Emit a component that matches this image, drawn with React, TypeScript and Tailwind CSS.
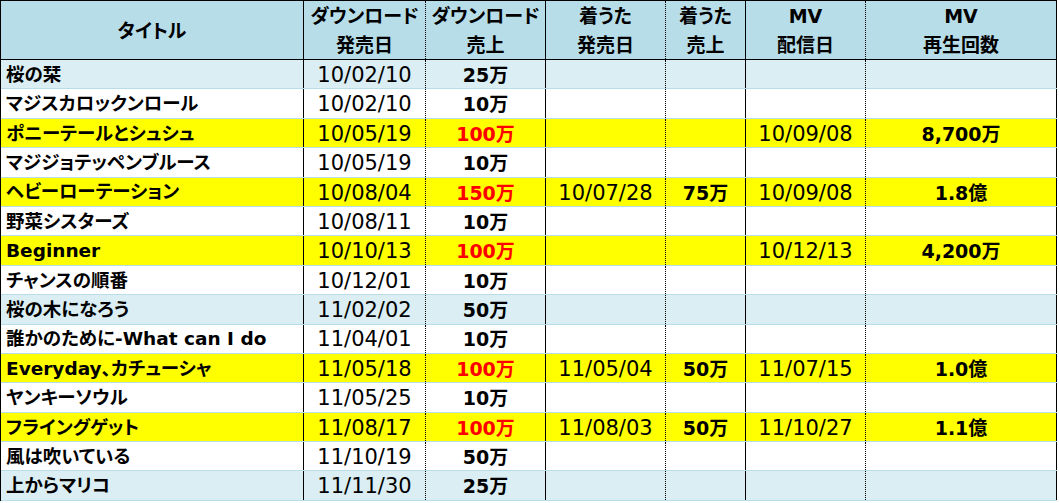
import React from "react";

type Row = {
  title: string;
  dlDate: string;
  dlSales: string;
  chDate?: string;
  chSales?: string;
  mvDate?: string;
  mvViews?: string;
  bg: "blue" | "white" | "yellow";
};

const rows: Row[] = [
  { title: "桜の栞", dlDate: "10/02/10", dlSales: "25万", bg: "blue" },
  { title: "マジスカロックンロール", dlDate: "10/02/10", dlSales: "10万", bg: "white" },
  { title: "ポニーテールとシュシュ", dlDate: "10/05/19", dlSales: "100万", mvDate: "10/09/08", mvViews: "8,700万", bg: "yellow" },
  { title: "マジジョテッペンブルース", dlDate: "10/05/19", dlSales: "10万", bg: "white" },
  { title: "ヘビーローテーション", dlDate: "10/08/04", dlSales: "150万", chDate: "10/07/28", chSales: "75万", mvDate: "10/09/08", mvViews: "1.8億", bg: "yellow" },
  { title: "野菜シスターズ", dlDate: "10/08/11", dlSales: "10万", bg: "white" },
  { title: "Beginner", dlDate: "10/10/13", dlSales: "100万", mvDate: "10/12/13", mvViews: "4,200万", bg: "yellow" },
  { title: "チャンスの順番", dlDate: "10/12/01", dlSales: "10万", bg: "white" },
  { title: "桜の木になろう", dlDate: "11/02/02", dlSales: "50万", bg: "blue" },
  { title: "誰かのために-What can I do", dlDate: "11/04/01", dlSales: "10万", bg: "white" },
  { title: "Everyday、カチューシャ", dlDate: "11/05/18", dlSales: "100万", chDate: "11/05/04", chSales: "50万", mvDate: "11/07/15", mvViews: "1.0億", bg: "yellow" },
  { title: "ヤンキーソウル", dlDate: "11/05/25", dlSales: "10万", bg: "white" },
  { title: "フライングゲット", dlDate: "11/08/17", dlSales: "100万", chDate: "11/08/03", chSales: "50万", mvDate: "11/10/27", mvViews: "1.1億", bg: "yellow" },
  { title: "風は吹いている", dlDate: "11/10/19", dlSales: "50万", bg: "white" },
  { title: "上からマリコ", dlDate: "11/11/30", dlSales: "25万", bg: "blue" },
];

const bgClass = {
  blue: "bg-[#daeef3]",
  white: "bg-white",
  yellow: "bg-[#ffff00]",
};

function HeadCell({ lines, className }: { lines: string[]; className: string }) {
  return (
    <div className={`flex flex-col items-center justify-center leading-[29px] pt-[2px] ${className}`}>
      {lines.map((l) => (
        <span key={l}>{l}</span>
      ))}
    </div>
  );
}

export default function App() {
  const solid = "border-r border-black";
  const dotted = "border-r border-dotted border-black";

  return (
    <div className="w-[1059px] h-[503px] bg-white">
      <div
        className="w-[1057px] border-l border-t border-black text-black"
        style={{ fontFamily: '"DejaVu Sans", "Noto Sans CJK JP", sans-serif', fontFeatureSettings: '"palt"' }}
      >
        {/* header */}
        <div className="flex h-[59px] bg-[#b7dde8] border-b border-black font-bold text-[19px]">
          <HeadCell lines={["タイトル"]} className={`w-[303px] ${solid}`} />
          <HeadCell lines={["ダウンロード", "発売日"]} className={`w-[122px] ${dotted}`} />
          <HeadCell lines={["ダウンロード", "売上"]} className={`w-[120px] ${solid}`} />
          <HeadCell lines={["着うた", "発売日"]} className={`w-[120px] ${dotted}`} />
          <HeadCell lines={["着うた", "売上"]} className={`w-[80px] ${solid}`} />
          <HeadCell lines={["MV", "配信日"]} className={`w-[120px] ${dotted}`} />
          <HeadCell lines={["MV", "再生回数"]} className={`w-[191px] ${solid}`} />
        </div>

        {/* body */}
        {rows.map((r) => {
          const red = r.bg === "yellow";
          return (
            <div
              key={r.title}
              className={`flex h-[29.4px] border-b border-[#b7dde8] items-stretch ${bgClass[r.bg]}`}
            >
              <div className={`w-[303px] ${solid} flex items-center pl-[5px] pt-[1px] font-bold text-[18.5px] whitespace-nowrap`}>
                {r.title}
              </div>
              <div className={`w-[122px] ${dotted} flex items-center justify-center pt-[3px] text-[21px]`}>
                {r.dlDate}
              </div>
              <div
                className={`w-[120px] ${solid} flex items-center justify-center pt-[2px] font-bold text-[19px] ${
                  red ? "text-[#ff0000]" : ""
                }`}
              >
                {r.dlSales}
              </div>
              <div className={`w-[120px] ${dotted} flex items-center justify-center pt-[3px] text-[21px]`}>
                {r.chDate ?? ""}
              </div>
              <div className={`w-[80px] ${solid} flex items-center justify-center pt-[2px] font-bold text-[19px]`}>
                {r.chSales ?? ""}
              </div>
              <div className={`w-[120px] ${dotted} flex items-center justify-center pt-[3px] text-[21px]`}>
                {r.mvDate ?? ""}
              </div>
              <div className={`w-[191px] ${solid} flex items-center justify-center pt-[2px] font-bold text-[19px]`}>
                {r.mvViews ?? ""}
              </div>
            </div>
          );
        })}
      </div>
    </div>
  );
}
